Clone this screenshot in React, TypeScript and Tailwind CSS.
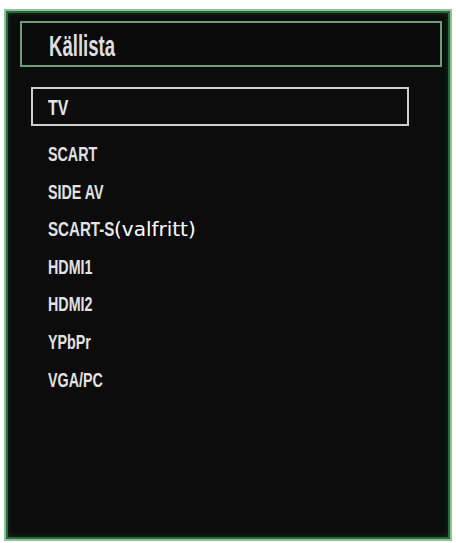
import React from "react";

const cond = { fontFamily: '"Liberation Sans", Arial, sans-serif' };

function Item({ children }: { children: React.ReactNode }) {
  return (
    <div className="h-[37.6px] leading-[37.6px] pl-[17px] text-[21px] font-bold text-[#e2e2e2] whitespace-nowrap" style={cond}>
      <span className="inline-block origin-left scale-x-[0.68]">{children}</span>
    </div>
  );
}

export default function App() {
  return (
    <div className="w-[456px] h-[543px] bg-white pt-[9px] px-[4px] pb-[2px] flex flex-col">
      <div className="flex-1 bg-[#0c0c0c] border-2 border-[#8cc29a] shadow-[inset_0_0_0_2px_#2c6a3b,inset_0_0_7px_#1b4a26] pt-[10px] pl-[14px] pr-[8px]">
        <div className="h-[46px] border-2 border-[#6f9c7a] bg-[#0a0a0a] pl-[27px] pt-[5px] text-[29px] leading-[37px] font-bold text-[#dedede]" style={cond}>
          <span className="inline-block origin-left scale-x-[0.64]">Källista</span>
        </div>
        <div className="pl-[11px] pt-[20px]">
          <div className="w-[378px] h-[39px] border-2 border-[#cfcfcf] pl-[15px] pt-[2px] text-[22px] leading-[33px] font-bold text-[#e6e6e6]" style={cond}>
            <span className="inline-block origin-left scale-x-[0.72]">TV</span>
          </div>
          <div className="pt-[9px]">
            <Item>SCART</Item>
            <Item>SIDE AV</Item>
            <div className="h-[37.6px] leading-[37.6px] pl-[17px] whitespace-nowrap flex items-baseline">
              <span className="inline-block w-[66px] text-[21px] font-bold text-[#e2e2e2]" style={cond}>
                <span className="inline-block origin-left scale-x-[0.72]">SCART-S</span>
              </span>
              <span className="text-[20px] text-white" style={{ fontFamily: '"DejaVu Sans", sans-serif' }}>(valfritt)</span>
            </div>
            <Item>HDMI1</Item>
            <Item>HDMI2</Item>
            <Item>YPbPr</Item>
            <Item>VGA/PC</Item>
          </div>
        </div>
      </div>
    </div>
  );
}
